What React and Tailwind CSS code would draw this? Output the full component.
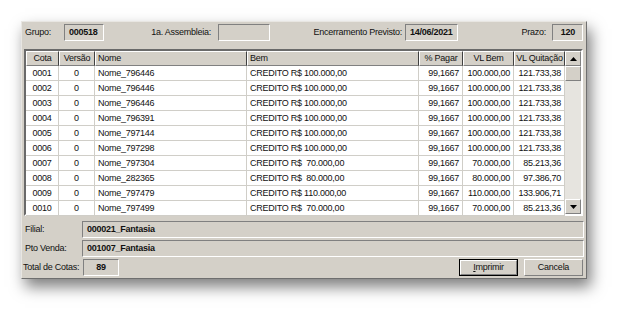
import React from "react";

const rows = [
  ["0001", "0", "Nome_796446", "CREDITO R$ 100.000,00", "99,1667", "100.000,00", "121.733,38"],
  ["0002", "0", "Nome_796446", "CREDITO R$ 100.000,00", "99,1667", "100.000,00", "121.733,38"],
  ["0003", "0", "Nome_796446", "CREDITO R$ 100.000,00", "99,1667", "100.000,00", "121.733,38"],
  ["0004", "0", "Nome_796391", "CREDITO R$ 100.000,00", "99,1667", "100.000,00", "121.733,38"],
  ["0005", "0", "Nome_797144", "CREDITO R$ 100.000,00", "99,1667", "100.000,00", "121.733,38"],
  ["0006", "0", "Nome_797298", "CREDITO R$ 100.000,00", "99,1667", "100.000,00", "121.733,38"],
  ["0007", "0", "Nome_797304", "CREDITO R$  70.000,00", "99,1667", "70.000,00", "85.213,36"],
  ["0008", "0", "Nome_282365", "CREDITO R$  80.000,00", "99,1667", "80.000,00", "97.386,70"],
  ["0009", "0", "Nome_797479", "CREDITO R$ 110.000,00", "99,1667", "110.000,00", "133.906,71"],
  ["0010", "0", "Nome_797499", "CREDITO R$  70.000,00", "99,1667", "70.000,00", "85.213,36"],
];

// column widths + alignment for header and body
const cols = [
  { label: "Cota", w: "w-[33px]", head: "justify-center", body: "justify-center" },
  { label: "Versão", w: "w-[36px]", head: "justify-center", body: "justify-center" },
  { label: "Nome", w: "w-[152px]", head: "justify-start", body: "justify-start" },
  { label: "Bem", w: "w-[172px]", head: "justify-start", body: "justify-start" },
  { label: "% Pagar", w: "w-[44px]", head: "justify-center", body: "justify-end" },
  { label: "VL Bem", w: "w-[51px]", head: "justify-center", body: "justify-end" },
  { label: "VL Quitação", w: "w-[51px]", head: "justify-center", body: "justify-end" },
];

const sunken = "border border-t-[#808080] border-l-[#808080] border-b-white border-r-white";
const raised = "border border-t-white border-l-white border-b-[#808080] border-r-[#808080]";

const Field = ({ w, children, className = "" }) => (
  <div className={`${w} h-[17px] ${sunken} bg-[#d4d0c8] flex items-center font-bold ${className}`}>
    {children}
  </div>
);

const Label = ({ w, children, className = "" }) => (
  <div className={`${w} h-[17px] flex items-center whitespace-nowrap ${className}`}>{children}</div>
);

export default function App() {
  return (
    <div className="w-[630px] h-[322px] bg-white pt-[21px] pl-[21px] overflow-hidden font-['Liberation_Sans',Arial,sans-serif] text-[9px] tracking-[-0.25px] text-[#111] leading-none">
      <div className="w-[566px] h-[258px] bg-[#d4d0c8] border border-t-[#e8e6e2] border-l-[#e8e6e2] border-b-[#6f6f6f] border-r-[#6f6f6f] shadow-[4px_8px_14px_rgba(0,0,0,0.5)] flex flex-col">
        {/* header fields */}
        <div className="flex items-center mt-[2px] pl-[3px]">
          <Label w="w-[39px]">Grupo:</Label>
          <Field w="w-[40px]" className="pl-[4px]">000518</Field>
          <Label w="w-[114px]" className="justify-end pr-[7px]">1a. Assembleia:</Label>
          <Field w="w-[52px]" />
          <Label w="w-[135px]" className="justify-end pr-[3px]">Encerramento Previsto:</Label>
          <Field w="w-[53px]" className="pl-[4px]">14/06/2021</Field>
          <Label w="w-[94px]" className="justify-end pr-[6px]">Prazo:</Label>
          <Field w="w-[31px]" className="justify-end pr-[7px]">120</Field>
        </div>

        {/* grid */}
        <div className="ml-[2px] mt-[8px] w-[559px] h-[167px] border-2 border-t-[#6a6a6a] border-l-[#6a6a6a] border-b-white border-r-white bg-white flex">
          <div className="flex flex-col">
            <div className="flex h-[15px]">
              {cols.map((c) => (
                <div
                  key={c.label}
                  className={`${c.w} h-[15px] border border-t-white border-l-white border-b-[#808080] border-r-[#404040] bg-[#d4d0c8] flex items-center px-[2px] ${c.head} whitespace-nowrap`}
                >
                  {c.label}
                </div>
              ))}
            </div>
            {rows.map((r) => (
              <div key={r[0]} className="flex h-[15px]">
                {r.map((v, i) => (
                  <div
                    key={i}
                    className={`${cols[i].w} h-[15px] border-r border-b border-[#d0cec8] flex items-center px-[3px] ${cols[i].body} whitespace-pre`}
                  >
                    {v}
                  </div>
                ))}
              </div>
            ))}
          </div>
          {/* scrollbar */}
          <div className="w-[16px] flex flex-col bg-[#e6e4df]">
            <div className={`h-[15px] ${raised} bg-[#d4d0c8] flex items-center justify-center`}>
              <svg width="7" height="4" viewBox="0 0 7 4"><path d="M3.5 0L7 4H0z" fill="#000" /></svg>
            </div>
            <div className={`h-[15px] ${raised} bg-[#d4d0c8]`} />
            <div className="flex-1" />
            <div className={`h-[15px] ${raised} bg-[#d4d0c8] flex items-center justify-center`}>
              <svg width="7" height="4" viewBox="0 0 7 4"><path d="M0 0H7L3.5 4z" fill="#000" /></svg>
            </div>
          </div>
        </div>

        {/* bottom fields */}
        <div className="flex items-center mt-[5px] pl-[3px]">
          <Label w="w-[57px]">Filial:</Label>
          <Field w="w-[502px]" className="pl-[4px]">000021_Fantasia</Field>
        </div>
        <div className="flex items-center mt-[2px] pl-[3px]">
          <Label w="w-[57px]">Pto Venda:</Label>
          <Field w="w-[502px]" className="pl-[4px]">001007_Fantasia</Field>
        </div>
        <div className="flex items-center mt-[2px] pl-[1px]">
          <Label w="w-[60px]">Total de Cotas:</Label>
          <Field w="w-[36px]" className="justify-center">89</Field>
          <div className="flex-1" />
          <button className="w-[59px] h-[17px] border border-black bg-[#d4d0c8] flex items-center justify-center">
            <span className="w-full h-full flex items-center justify-center border border-t-white border-l-white border-b-[#808080] border-r-[#808080]">
              <span className="underline">I</span>mprimir
            </span>
          </button>
          <button className={`ml-[6px] mr-[3px] w-[59px] h-[17px] ${raised} bg-[#d4d0c8] flex items-center justify-center`}>
            Cancela
          </button>
        </div>
      </div>
    </div>
  );
}
